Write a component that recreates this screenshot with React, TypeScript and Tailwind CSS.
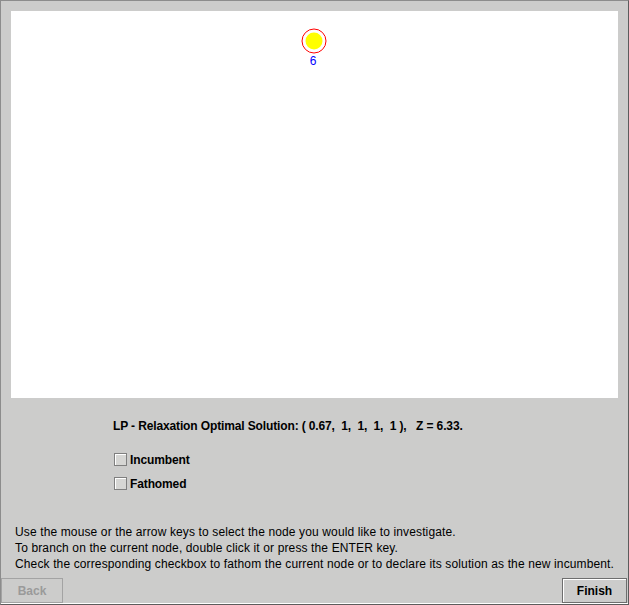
import React from 'react'

function Node() {
  return (
    <>
      <svg
        className="absolute left-[288px] top-[15px]"
        width="30"
        height="30"
        viewBox="0 0 30 30"
      >
        <circle cx="15" cy="15" r="12" fill="none" stroke="#ff0000" strokeWidth="1" />
        <circle cx="15" cy="15" r="8.5" fill="#ffff00" />
      </svg>
      <div className="absolute left-[297px] top-[43px] w-[10px] text-center text-[12px] leading-[14px] text-[#0000ff]">
        6
      </div>
    </>
  )
}

function Check({ label }: { label: string }) {
  return (
    <label className="flex items-center h-[13px]">
      <span className="w-[13px] h-[13px] border border-[#7f7f7f] bg-[#d6d6d4] shadow-[inset_1px_1px_0_#ffffff]" />
      <span className="ml-[3px] text-[12px] leading-[14px] font-bold tracking-[-0.12px] text-black">{label}</span>
    </label>
  )
}

export default function App() {
  return (
    <div
      className="w-[629px] h-[605px] flex flex-col bg-[#cccccb] border-l border-t border-[#8c8c8c] border-r-[#5c5c5c] border-b-[#5c5c5c] border-r border-b shadow-[inset_0_-1px_0_#ffffff]"
      style={{ fontFamily: '"Liberation Sans", Arial, sans-serif' }}
    >
      <div className="relative ml-[10px] mt-[10px] w-[607px] h-[387px] bg-white">
        <Node />
      </div>

      <div className="ml-[112px] mt-[21px] text-[12px] leading-[14px] font-bold tracking-[-0.13px] text-black whitespace-pre">
        {'LP - Relaxation Optimal Solution: ( 0.67,  1,  1,  1,  1 ),   Z = 6.33.'}
      </div>

      <div className="ml-[113px] mt-[20px] flex flex-col gap-[11px]">
        <Check label="Incumbent" />
        <Check label="Fathomed" />
      </div>

      <div className="ml-[14px] mt-[34px] text-[12px] leading-[16px] tracking-[0.13px] text-black">
        <div>Use the mouse or the arrow keys to select the node you would like to investigate.</div>
        <div>To branch on the current node, double click it or press the ENTER key.</div>
        <div>Check the corresponding checkbox to fathom the current node or to declare its solution as the new incumbent.</div>
      </div>

      <div className="mt-[6px] flex justify-between mr-[1px]">
        <button
          disabled
          className="w-[62px] h-[25px] pt-[1px] border border-[#a3a3a3] text-[12px] font-bold text-[#9a9a9a]"
        >
          Back
        </button>
        <button className="w-[65px] h-[25px] pt-[1px] border border-[#6e6e6e] shadow-[inset_1px_1px_0_#ffffff] text-[12px] font-bold text-black">
          Finish
        </button>
      </div>
    </div>
  )
}
